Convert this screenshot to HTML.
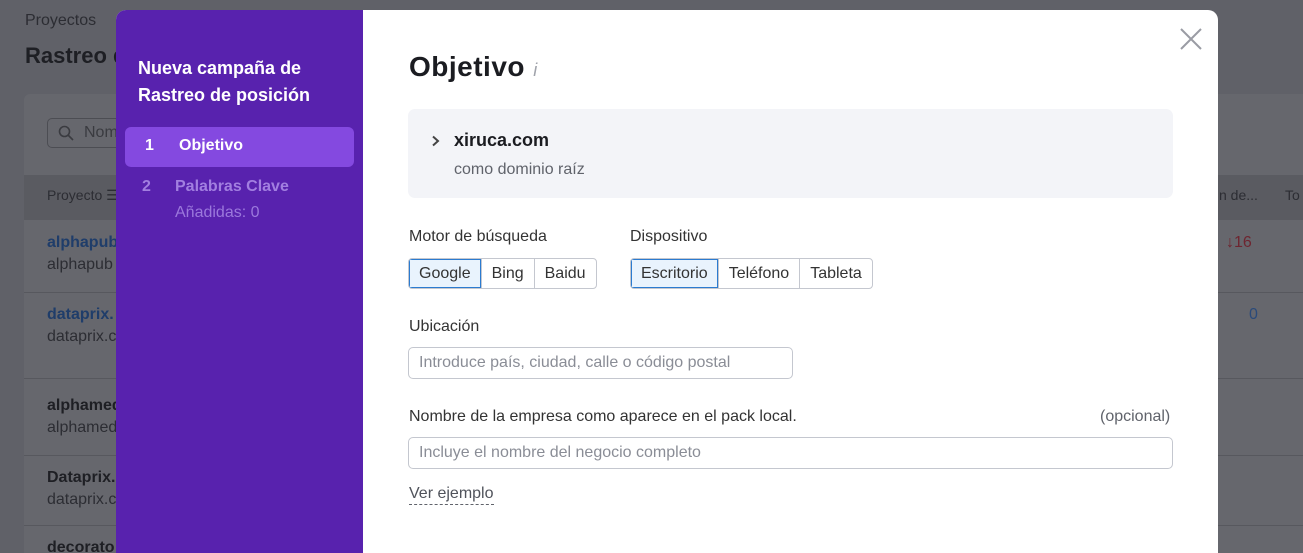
<!DOCTYPE html>
<html><head><meta charset="utf-8"><style>
*{box-sizing:border-box;margin:0;padding:0}
html,body{width:1303px;height:553px;overflow:hidden}
body{background:#606168;font-family:"Liberation Sans",Arial,sans-serif;position:relative}
.t{position:absolute;white-space:nowrap}
.card{position:absolute;left:24px;top:94px;width:1300px;height:470px;background:#66676d;border-radius:6px}
.row{position:absolute;left:24px;width:1300px;border-top:1px solid #57585e}
.modal{position:absolute;left:116px;top:10px;width:1102px;height:543px;background:#fff;border-radius:10px 10px 0 0;overflow:hidden}
.side{position:absolute;left:0;top:0;width:247px;height:100%;background:#5822ae}
.main{position:absolute;left:247px;top:0;right:0;bottom:0}
.seg{position:absolute;display:flex;height:31px;border:1px solid #c4c7cf;border-radius:4px;overflow:hidden;font-size:16px;color:#333}
.seg div{padding:0 10px;line-height:29px;border-left:1px solid #c4c7cf}
.seg div:first-child{border-left:none}
.seg .on{background:#e9f3fd;box-shadow:inset 0 0 0 1px #2b7bd0}
.inp{position:absolute;border:1px solid #c4c7cf;border-radius:5px;height:32px;font-size:16px;color:#8a8d96;padding-left:10px;line-height:30px}
</style></head><body>
<div class="t" style="left:25px;top:12px;font-size:16px;color:#2c2d33">Proyectos</div>
<div class="t" style="left:25px;top:43px;font-size:22px;font-weight:bold;color:#1e1f24">Rastreo d</div>
<div class="card"></div>
<div class="t" style="left:47px;top:118px;width:100px;height:30px;border:1px solid #4c4d53;border-radius:5px;color:#3a3b40;font-size:16px;line-height:28px;padding-left:36px">Nom</div>
<svg style="position:absolute;left:58px;top:125px" width="16" height="16"><circle cx="6.5" cy="6.5" r="5" fill="none" stroke="#3a3b40" stroke-width="1.6"/><path d="M10 10L15 15" stroke="#3a3b40" stroke-width="1.6"/></svg>
<div style="position:absolute;left:24px;top:175px;width:1300px;height:45px;background:#5a5b61"></div>
<div class="t" style="left:47px;top:187px;font-size:14px;color:#2c2d33">Proyecto ☰</div>
<div class="t" style="left:1219px;top:187px;font-size:14px;color:#2c2d33">n de...</div>
<div class="t" style="left:1285px;top:187px;font-size:14px;color:#2c2d33">To</div>
<div class="t" style="left:47px;top:234px;font-size:16px;font-weight:bold;color:#1f3d6a">alphapub</div>
<div class="t" style="left:47px;top:256px;font-size:16px;color:#2c2d33">alphapub</div>
<div class="t" style="left:1226px;top:234px;font-size:16px;color:#6e2530">↓16</div>
<div class="row" style="top:292px"></div>
<div class="t" style="left:47px;top:306px;font-size:16px;font-weight:bold;color:#1f3d6a">dataprix.</div>
<div class="t" style="left:47px;top:328px;font-size:16px;color:#2c2d33">dataprix.c</div>
<div class="t" style="left:1249px;top:306px;font-size:16px;color:#2a4a7a">0</div>
<div class="row" style="top:378px"></div>
<div class="t" style="left:47px;top:397px;font-size:16px;font-weight:bold;color:#1e1f24">alphamed</div>
<div class="t" style="left:47px;top:419px;font-size:16px;color:#2c2d33">alphamed</div>
<div class="row" style="top:455px"></div>
<div class="t" style="left:47px;top:469px;font-size:16px;font-weight:bold;color:#1e1f24">Dataprix.</div>
<div class="t" style="left:47px;top:491px;font-size:16px;color:#2c2d33">dataprix.c</div>
<div class="row" style="top:525px"></div>
<div class="t" style="left:47px;top:539px;font-size:16px;font-weight:bold;color:#1e1f24">decorato</div>

<div class="modal">
 <div class="side">
  <div class="t" style="left:22px;top:45px;font-size:18px;font-weight:bold;color:#fff;line-height:27px">Nueva campaña de<br>Rastreo de posición</div>
  <div style="position:absolute;left:9px;top:117px;width:229px;height:40px;background:#8449e0;border-radius:6px"></div>
  <div class="t" style="left:29px;top:127px;font-size:16px;font-weight:bold;color:#fff">1</div>
  <div class="t" style="left:63px;top:127px;font-size:16px;font-weight:bold;color:#fff">Objetivo</div>
  <div class="t" style="left:26px;top:168px;font-size:16px;font-weight:bold;color:#a27fe0">2</div>
  <div class="t" style="left:59px;top:168px;font-size:16px;font-weight:bold;color:#a27fe0">Palabras Clave</div>
  <div class="t" style="left:59px;top:194px;font-size:16px;color:#9b78dc">Añadidas: 0</div>
 </div>
 <div class="main">
  <div class="t" style="left:46px;top:41px;font-size:28px;font-weight:bold;color:#1b1c21;letter-spacing:0.5px">Objetivo <span style="font-size:18px;font-style:italic;font-weight:normal;color:#a0a3ab">i</span></div>
  <svg style="position:absolute;left:817px;top:18px" width="22" height="22"><path d="M1 1L21 21M21 1L1 21" stroke="#9a9ca4" stroke-width="2"/></svg>
  <div style="position:absolute;left:45px;top:99px;width:765px;height:89px;background:#f3f4f8;border-radius:7px"></div>
  <svg style="position:absolute;left:68px;top:125px" width="10" height="12"><path d="M2 1.5L7 6L2 10.5" fill="none" stroke="#444" stroke-width="2"/></svg>
  <div class="t" style="left:91px;top:120px;font-size:18px;font-weight:bold;color:#1b1c21">xiruca.com</div>
  <div class="t" style="left:91px;top:151px;font-size:16px;color:#60636b">como dominio raíz</div>
  <div class="t" style="left:46px;top:218px;font-size:16px;color:#333">Motor de búsqueda</div>
  <div class="t" style="left:267px;top:218px;font-size:16px;color:#333">Dispositivo</div>
  <div class="seg" style="left:45px;top:248px"><div class="on">Google</div><div>Bing</div><div>Baidu</div></div>
  <div class="seg" style="left:267px;top:248px"><div class="on">Escritorio</div><div>Teléfono</div><div>Tableta</div></div>
  <div class="t" style="left:46px;top:308px;font-size:16px;color:#333">Ubicación</div>
  <div class="inp" style="left:45px;top:337px;width:385px">Introduce país, ciudad, calle o código postal</div>
  <div class="t" style="left:46px;top:398px;font-size:16px;color:#333">Nombre de la empresa como aparece en el pack local.</div>
  <div class="t" style="left:737px;top:398px;font-size:16px;color:#60636b">(opcional)</div>
  <div class="inp" style="left:45px;top:427px;width:765px">Incluye el nombre del negocio completo</div>
  <div class="t" style="left:46px;top:474px;font-size:16px;color:#50535b;border-bottom:1px dashed #60636b;line-height:20px">Ver ejemplo</div>
 </div>
</div>
</body></html>
